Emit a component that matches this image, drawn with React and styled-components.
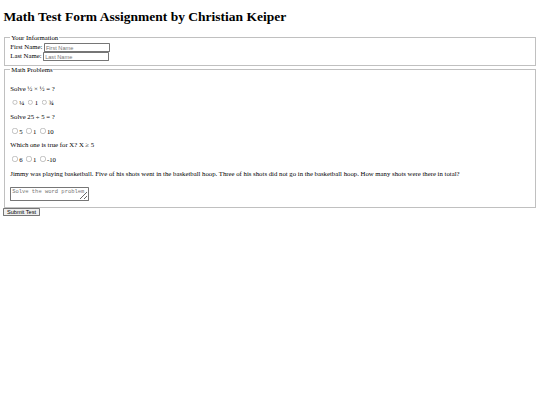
import styled, { createGlobalStyle } from "styled-components";

const GlobalStyle = createGlobalStyle`
  html, body {
    margin: 0;
    padding: 0;
    background: #fff;
  }
`;

const questions = [
  { name: "q1", text: "Solve ½ × ½ = ?", options: ["¼", "1", "¾"] },
  { name: "q2", text: "Solve 25 ÷ 5 = ?", options: ["5", "1", "10"] },
  { name: "q3", text: "Which one is true for X? X ≥ 5", options: ["6", "1", "-10"] },
];

export default function App() {
  return (
    <Page>
      <GlobalStyle />
      <Title>Math Test Form Assignment by Christian Keiper</Title>
      <form onSubmit={(e) => e.preventDefault()}>
        <Group>
          <Legend>Your Information</Legend>
          <label>First Name: </label>
          <TextInput type="text" placeholder="First Name" />
          <br />
          <label>Last Name: </label>
          <TextInput type="text" placeholder="Last Name" />
        </Group>
        <Group $top="11px">
          <Legend>Math Problems</Legend>
          {questions.map((q) => (
            <div key={q.name}>
              <Question>{q.text}</Question>
              <Question>
                {q.options.map((o, i) => (
                  <span key={o}>
                    <Radio type="radio" name={q.name} value={o} />
                    {o}
                    {i < q.options.length - 1 ? " " : ""}
                  </span>
                ))}
              </Question>
            </div>
          ))}
          <Question>
            Jimmy was playing basketball. Five of his shots went in the basketball hoop. Three of his
            shots did not go in the basketball hoop. How many shots were there in total?
          </Question>
          <Answer placeholder="Solve the word problem" />
        </Group>
        <Button type="submit">Submit Test</Button>
      </form>
    </Page>
  );
}

const Page = styled.div`
  zoom: 0.421875;
  padding: 8px;
  font-family: "Liberation Serif", "Times New Roman", serif;
  font-size: 16px;
  color: #000;
`;

const Title = styled.h1`
  font-size: 32px;
  font-weight: bold;
  margin: 13.44px 0 21.44px;
`;

const Group = styled.fieldset`
  margin: 0 2px;
  padding: ${(p) => p.$top || "5.6px"} 12px 10px;
  border: 2px groove rgb(192, 192, 192);
`;

const Legend = styled.legend`
  padding: 0 2px;
`;

const TextInput = styled.input`
  box-sizing: border-box;
  width: 156px;
  height: 21px;
  font-family: "Liberation Sans", Arial, sans-serif;
  font-size: 13.33px;
  padding: 1px 2px;
  border: 1px solid rgb(118, 118, 118);
  border-radius: 2px;
`;

const Question = styled.p`
  margin: 16px 0;
`;

const Radio = styled.input`
  margin: 3px 3px 0 5px;
`;

const Answer = styled.textarea`
  box-sizing: border-box;
  width: 186px;
  height: 35px;
  margin-top: 8px;
  overflow: hidden;
  white-space: nowrap;
  font-family: "Liberation Mono", "Courier New", monospace;
  font-size: 13px;
  padding: 2px;
  border: 1px solid rgb(118, 118, 118);
  border-radius: 2px;
`;

const Button = styled.button`
  font-family: "Liberation Sans", Arial, sans-serif;
  font-size: 13.33px;
  padding: 1px 6px;
  border: 1px solid rgb(118, 118, 118);
  border-radius: 2px;
  background: #efefef;
`;
